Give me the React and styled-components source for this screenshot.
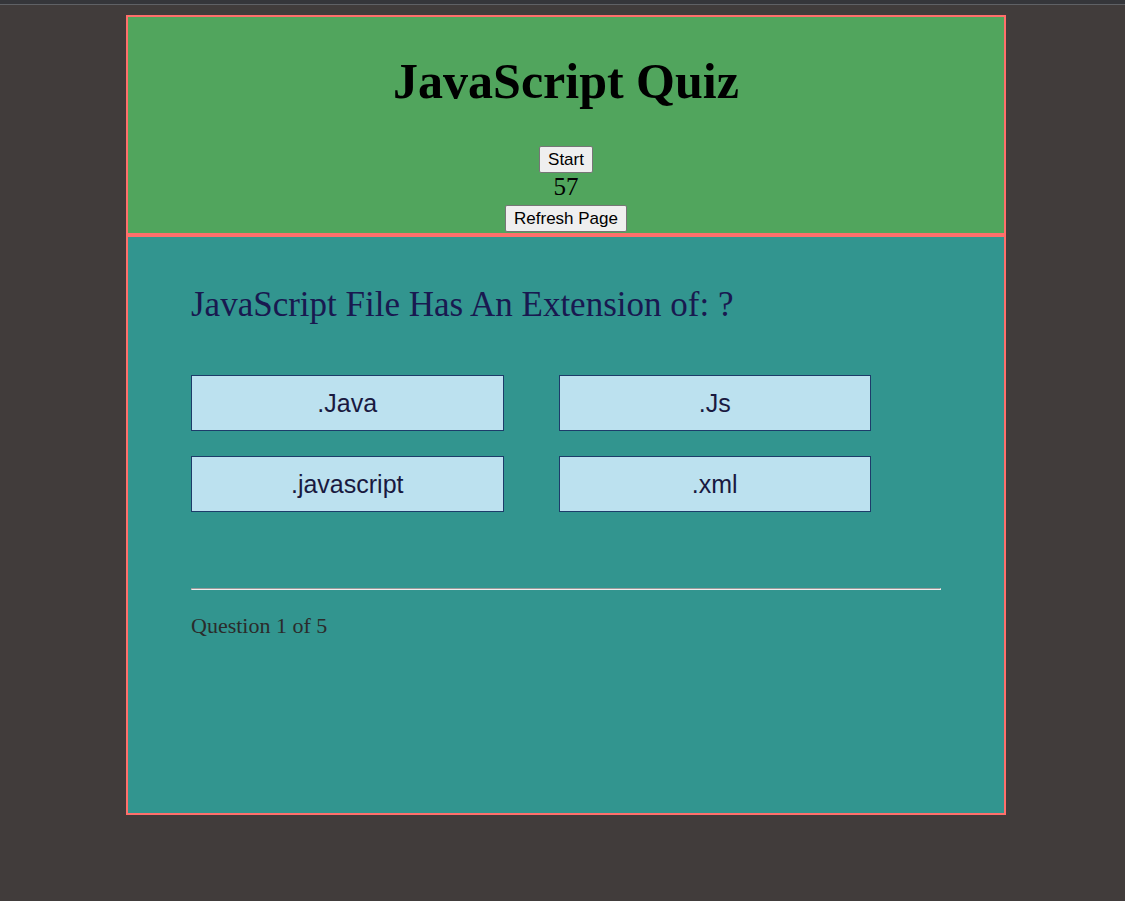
import React, { useState } from "react";
import styled, { createGlobalStyle } from "styled-components";

const serif = '"Liberation Serif", "Times New Roman", serif';
const sans = '"Liberation Sans", Arial, sans-serif';

const GlobalStyle = createGlobalStyle`
  * {
    box-sizing: border-box;
  }
  body {
    margin: 0;
    background: #413c3b;
    color: #000;
    font-family: ${serif};
    font-size: 25px;
    line-height: 28px;
  }
`;

const TopStrip = styled.div`
  height: 5px;
  background: #35363a;
  border-bottom: 1px solid #5f6165;
`;

const Page = styled.div`
  padding: 10px 9px 10px 16px;
`;

const Container = styled.main`
  width: 80%;
  margin: 0 auto;
`;

const Panel = styled.section`
  border: 2px solid #ff6f6b;
`;

const HeaderPanel = styled(Panel)`
  display: flex;
  flex-direction: column;
  align-items: center;
  padding: 35px 0 1px;
  background: #51a55d;
  text-align: center;
`;

const Title = styled.h1`
  margin: 0 0 36px;
  font-size: 50px;
  line-height: 58px;
  font-weight: bold;
`;

const ControlButton = styled.button`
  height: 27px;
  padding: 0 8px;
  border: 1px solid #767676;
  border-radius: 2px;
  background: #efefef;
  color: #000;
  font-family: ${sans};
  font-size: 17px;
  line-height: 20px;
`;

const Timer = styled.div`
  margin-bottom: 4px;
`;

const QuizPanel = styled(Panel)`
  min-height: 580px;
  padding: 48px 63px;
  background: #32958f;
`;

const Question = styled.p`
  margin: 0 0 50px;
  color: #191950;
  font-size: 35px;
  line-height: 40px;
`;

const Answers = styled.div`
  display: grid;
  grid-template-columns: 1fr 1fr;
  gap: 25px 55px;
  margin: 0 70px 76px 0;
`;

const AnswerButton = styled.button`
  height: 56px;
  padding: 0;
  border: 1px solid #1d3c6a;
  border-radius: 0;
  background: #bce1ef;
  color: #191940;
  font-family: ${sans};
  font-size: 25px;
  line-height: 28px;
`;

const Divider = styled.hr`
  height: 2px;
  margin: 0 0 23px;
  border: 1px solid;
  border-color: #9a9a9a #eeeeee #eeeeee #9a9a9a;
`;

const Progress = styled.p`
  margin: 0;
  color: #2b2b2b;
  font-size: 22px;
  line-height: 25px;
`;

const answers = [".Java", ".Js", ".javascript", ".xml"];

export default function App() {
  const [seconds, setSeconds] = useState(57);

  return (
    <>
      <GlobalStyle />
      <TopStrip />
      <Page>
        <Container>
          <HeaderPanel>
            <Title>JavaScript Quiz</Title>
            <ControlButton type="button" onClick={() => setSeconds(60)}>
              Start
            </ControlButton>
            <Timer>{seconds}</Timer>
            <ControlButton type="button" onClick={() => window.location.reload()}>
              Refresh Page
            </ControlButton>
          </HeaderPanel>
          <QuizPanel>
            <Question>JavaScript File Has An Extension of: ?</Question>
            <Answers>
              {answers.map((answer) => (
                <AnswerButton type="button" key={answer}>
                  {answer}
                </AnswerButton>
              ))}
            </Answers>
            <Divider />
            <Progress>Question 1 of 5</Progress>
          </QuizPanel>
        </Container>
      </Page>
    </>
  );
}
